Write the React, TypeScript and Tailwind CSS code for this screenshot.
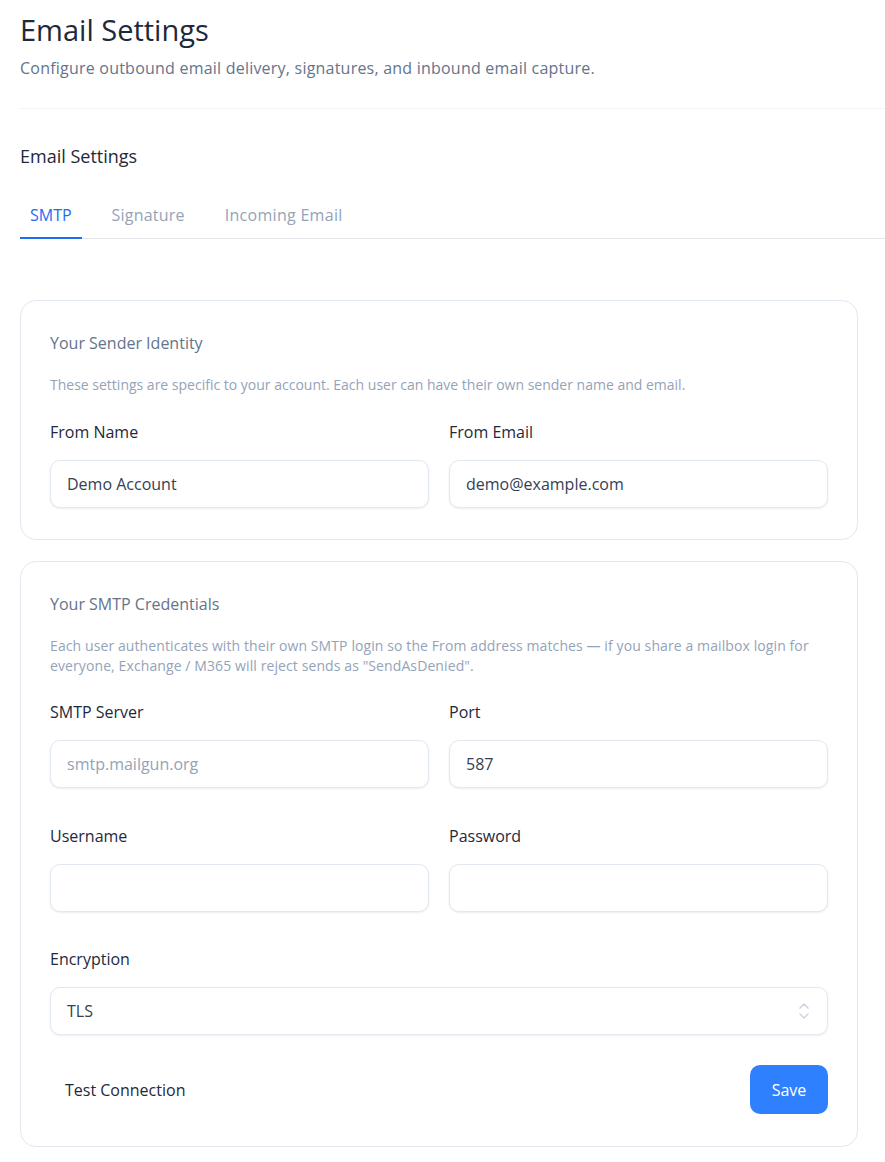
import React from "react";

function Field({ label, value, placeholder, className = "" }: { label: string; value?: string; placeholder?: string; className?: string }) {
  return (
    <div className={"flex flex-col " + className}>
      <label className="text-[16px] leading-6 text-[#1e293b]">{label}</label>
      <div className="mt-4 h-12 rounded-[10px] border border-[#e2e8f0] bg-white px-4 flex items-center shadow-[0_1px_2px_rgba(15,23,42,0.08)]">
        {value ? (
          <span className="text-[16px] text-[#334155]">{value}</span>
        ) : (
          <span className="text-[16px] text-[#94a3b8]">{placeholder ?? ""}</span>
        )}
      </div>
    </div>
  );
}

export default function App() {
  return (
    <div className="min-h-[1162px] bg-white pl-5 pt-3 text-[#1e293b]" style={{ fontFamily: '"Open Sans", "Noto Sans", sans-serif' }}>
      <h1 className="text-[29px] leading-9 text-[#1e293b]">Email Settings</h1>
      <p className="mt-2 text-[16px] leading-6 tracking-[0.22px] text-[#64748b]">
        Configure outbound email delivery, signatures, and inbound email capture.
      </p>
      <div className="mt-7 h-px bg-[#f1f5f9]" />

      <h2 className="mt-[33px] text-[18px] leading-7 text-[#1e293b]">Email Settings</h2>

      <div className="mt-[19px] flex gap-[20px] border-b border-[#e5e7eb]">
        <div className="-mb-px border-b-2 border-[#1d6cf2] px-[10px] pt-[14px] pb-[10px] text-[16px] leading-6 text-[#1d6cf2]">SMTP</div>
        <div className="px-[10px] pt-[14px] pb-[10px] text-[16px] leading-6 tracking-[0.2px] text-[#94a3b8]">Signature</div>
        <div className="px-[10px] pt-[14px] pb-[10px] text-[16px] leading-6 tracking-[0.3px] text-[#94a3b8]">Incoming Email</div>
      </div>

      <div className="mr-[27px] mt-[61px] flex flex-col gap-[21px]">
        <section className="rounded-[16px] border border-[#e2e8f0] bg-white px-[29px] pt-[30px] pb-[31px]">
          <h3 className="text-[16px] leading-6 text-[#64748b]">Your Sender Identity</h3>
          <p className="mt-5 text-[14px] leading-5 text-[#94a3b8]">
            These settings are specific to your account. Each user can have their own sender name and email.
          </p>
          <div className="mt-[25px] grid grid-cols-2 gap-x-5">
            <Field label="From Name" value="Demo Account" />
            <Field label="From Email" value="demo@example.com" />
          </div>
        </section>

        <section className="rounded-[16px] border border-[#e2e8f0] bg-white px-[29px] pt-[30px] pb-[32px]">
          <h3 className="text-[16px] leading-6 text-[#64748b]">Your SMTP Credentials</h3>
          <p className="mt-5 text-[14px] leading-5 tracking-[0.1px] text-[#94a3b8]">
            Each user authenticates with their own SMTP login so the From address matches — if you share a mailbox login for everyone, Exchange / M365 will reject sends as "SendAsDenied".
          </p>
          <div className="mt-6 grid grid-cols-2 gap-x-5 gap-y-9">
            <Field label="SMTP Server" placeholder="smtp.mailgun.org" />
            <Field label="Port" value="587" />
            <Field label="Username" />
            <Field label="Password" />
          </div>
          <div className="mt-[35px] flex flex-col">
            <label className="text-[16px] leading-6 text-[#1e293b]">Encryption</label>
            <div className="mt-4 h-12 rounded-[10px] border border-[#e2e8f0] bg-white pl-4 pr-4 flex items-center justify-between shadow-[0_1px_2px_rgba(15,23,42,0.08)]">
              <span className="text-[16px] text-[#334155]">TLS</span>
              <svg width="14" height="20" viewBox="0 0 14 20" fill="none" stroke="#cbd5e1" strokeWidth="1.5" strokeLinecap="round" strokeLinejoin="round">
                <path d="M3 7l4-4 4 4" />
                <path d="M3 13l4 4 4-4" />
              </svg>
            </div>
          </div>
          <div className="mt-[30px] flex items-center justify-between">
            <button className="h-[49px] px-[15px] text-[16px] text-[#1e293b]">Test Connection</button>
            <button className="h-[49px] w-[78px] rounded-[10px] bg-[#2f80ff] text-[16px] text-white">Save</button>
          </div>
        </section>
      </div>
    </div>
  );
}
